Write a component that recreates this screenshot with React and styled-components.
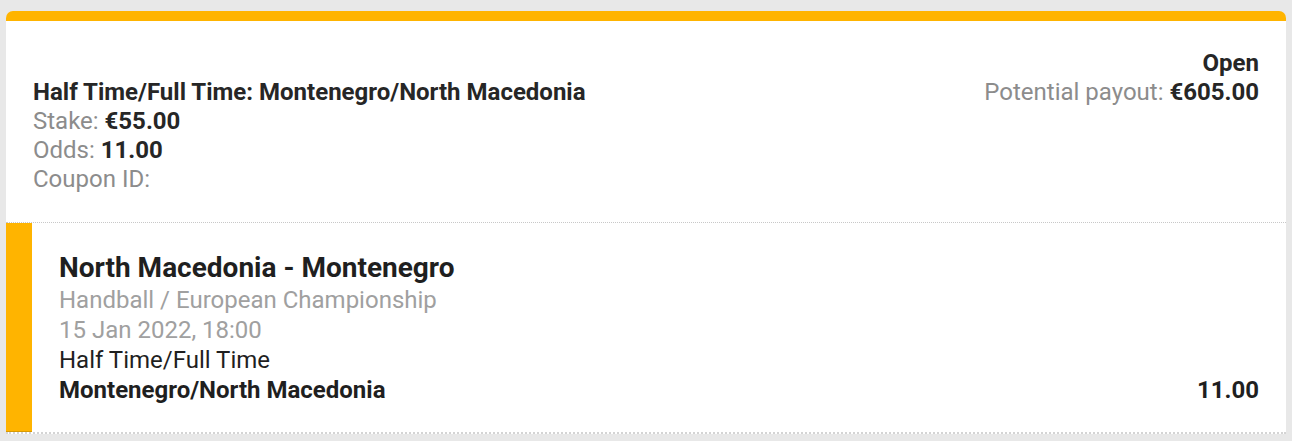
import React from 'react';
import styled, { createGlobalStyle } from 'styled-components';

const GlobalStyle = createGlobalStyle`
  body {
    margin: 0;
    background: #e8e8e8;
    font-family: Roboto, "Liberation Sans", Arial, sans-serif;
  }
`;

const Page = styled.div`
  padding: 11px 6px 0;
`;

const Card = styled.div`
  background: #fff;
  border-top: 10px solid #ffb400;
  border-radius: 7px 7px 0 0;
`;

const Summary = styled.div`
  display: flex;
  justify-content: space-between;
  padding: 28px 27px 28px;
  border-bottom: 1px dotted #c8c8c8;
  font-size: 24px;
  line-height: 29px;
`;

const Column = styled.div`
  display: flex;
  flex-direction: column;
  align-items: ${(p) => (p.$right ? 'flex-end' : 'flex-start')};
  padding-top: ${(p) => (p.$offset ? '29px' : '0')};
`;

const Strong = styled.span`
  font-weight: 700;
  color: #262626;
`;

const Muted = styled.span`
  color: #8c8c8c;
`;

const Selection = styled.div`
  display: flex;
  border-bottom: 2px dotted #d4d4d4;
`;

const Marker = styled.div`
  width: 26px;
  flex-shrink: 0;
  background: #ffb400;
  border-bottom: 1px solid #d99a00;
`;

const SelectionBody = styled.div`
  flex: 1;
  padding: 28px 27px 27px;
  font-size: 24px;
  line-height: 30px;
  color: #1f1f1f;
`;

const Event = styled.div`
  font-size: 28px;
  font-weight: 700;
  line-height: 34px;
  color: #1f1f1f;
`;

const Info = styled.div`
  color: #a0a0a0;
`;

const PickRow = styled.div`
  display: flex;
  justify-content: space-between;
  font-weight: 700;
`;

export default function App() {
  return (
    <Page>
      <GlobalStyle />
      <Card>
        <Summary>
          <Column $offset>
            <Strong>Half Time/Full Time: Montenegro/North Macedonia</Strong>
            <span>
              <Muted>Stake: </Muted>
              <Strong>€55.00</Strong>
            </span>
            <span>
              <Muted>Odds: </Muted>
              <Strong>11.00</Strong>
            </span>
            <Muted>Coupon ID:</Muted>
          </Column>
          <Column $right>
            <Strong>Open</Strong>
            <span>
              <Muted>Potential payout: </Muted>
              <Strong>€605.00</Strong>
            </span>
          </Column>
        </Summary>
        <Selection>
          <Marker />
          <SelectionBody>
            <Event>North Macedonia - Montenegro</Event>
            <Info>Handball / European Championship</Info>
            <Info>15 Jan 2022, 18:00</Info>
            <div>Half Time/Full Time</div>
            <PickRow>
              <span>Montenegro/North Macedonia</span>
              <span>11.00</span>
            </PickRow>
          </SelectionBody>
        </Selection>
      </Card>
    </Page>
  );
}
